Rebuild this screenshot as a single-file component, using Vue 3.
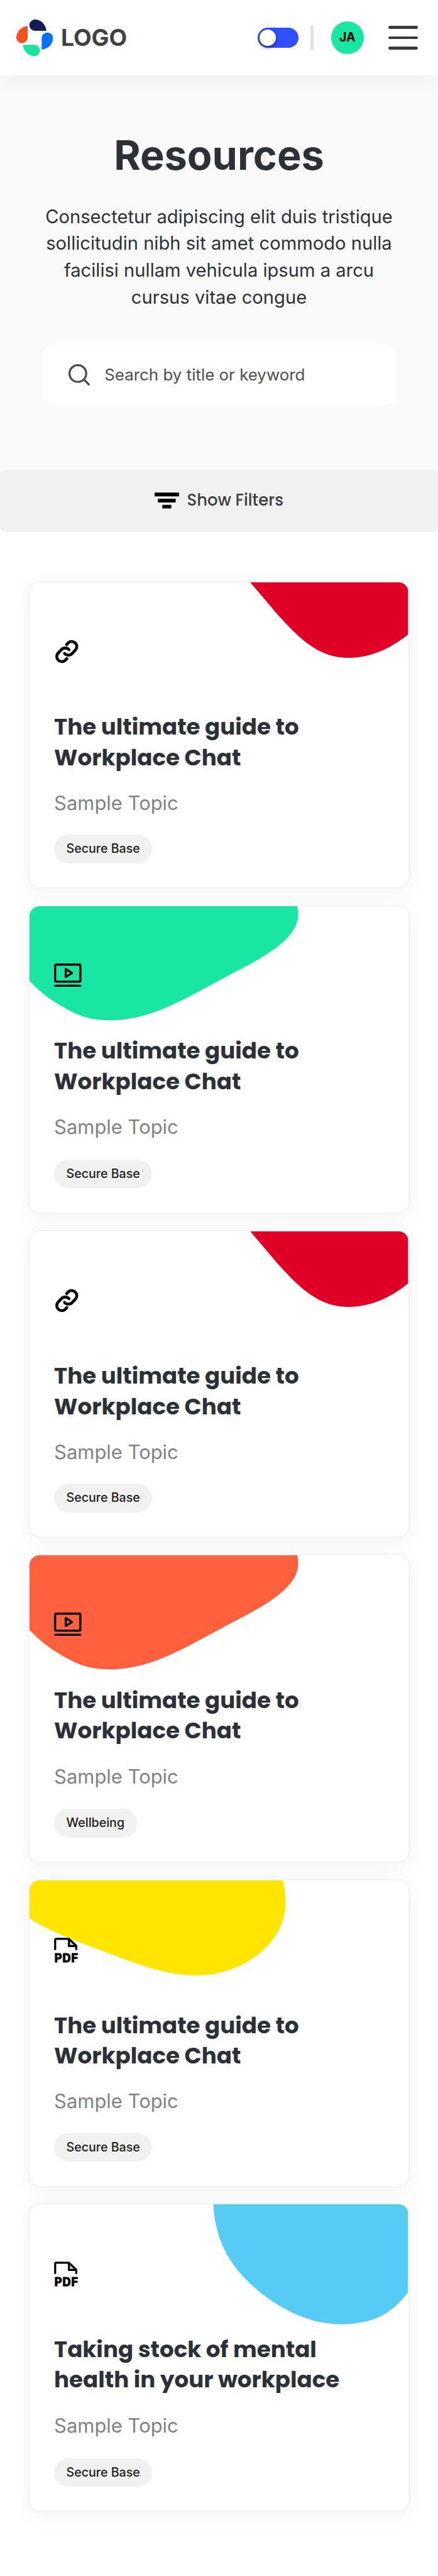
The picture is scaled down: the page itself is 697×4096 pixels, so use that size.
<script setup>
const blobs = {
  red: { fill: '#e10025', d: 'M651 0L728 91C790 160 850 222.5 938 222.5C1003 222.5 1060 198 1116 153.7V0Z' },
  green: { fill: '#19e6a3', d: 'M0 0V220.5C40 262 85 292 130 313.5C165 330 200 336.2 240 336.2C340 336.2 430 288 506 247.4L600 197C705 143 792 92 792 25C792 15 791 7 789 0Z' },
  orange: { fill: '#ff613f', d: 'M0 0V220.5C40 262 85 292 130 313.5C165 330 200 336.2 240 336.2C340 336.2 430 288 506 247.4L600 197C705 143 792 92 792 25C792 15 791 7 789 0Z' },
  yellow: { fill: '#ffe600', d: 'M0 0V112C45 142 100 163 153 184.3L240 217.4C320 248 405 279.8 491 279.8C632 279.8 755 183 755 66C755 42 752 20 747 0Z' },
  blue: { fill: '#56cbf3', d: 'M541.7 0C548 107 590 183 671 252C745 313 830 353.4 918 353.4C1005 353 1065 328 1116 259.5V0Z' },
}

const cards = [
  { title: 'The ultimate guide to Workplace Chat', topic: 'Sample Topic', tag: 'Secure Base', icon: 'link', blob: blobs.red },
  { title: 'The ultimate guide to Workplace Chat', topic: 'Sample Topic', tag: 'Secure Base', icon: 'video', blob: blobs.green },
  { title: 'The ultimate guide to Workplace Chat', topic: 'Sample Topic', tag: 'Secure Base', icon: 'link', blob: blobs.red },
  { title: 'The ultimate guide to Workplace Chat', topic: 'Sample Topic', tag: 'Wellbeing', icon: 'video', blob: blobs.orange },
  { title: 'The ultimate guide to Workplace Chat', topic: 'Sample Topic', tag: 'Secure Base', icon: 'pdf', blob: blobs.yellow },
  { title: 'Taking stock of mental health in your workplace', topic: 'Sample Topic', tag: 'Secure Base', icon: 'pdf', blob: blobs.blue },
]

const petals = [
  { angle: 0, fill: '#141b55' },
  { angle: 90, fill: '#0070ff' },
  { angle: 180, fill: '#19e5a0' },
  { angle: 270, fill: '#f25022' },
]
</script>

<template>
  <div class="page">
    <header class="header">
      <a class="brand">
        <svg class="mark" viewBox="0 0 36 36">
          <path
            v-for="p in petals"
            :key="p.angle"
            d="M18.3 11.1A5.55 5.55 0 0 1 18.3 0C24.2 0 29 5 29.5 11.1Z"
            :fill="p.fill"
            :transform="`rotate(${p.angle} 18 18)`"
          />
        </svg>
        <span class="brand-name">LOGO</span>
      </a>
      <div class="actions">
        <button class="toggle" aria-label="Theme"><span class="knob"></span></button>
        <span class="divider"></span>
        <span class="avatar">JA</span>
        <button class="burger" aria-label="Menu"><i></i><i></i><i></i></button>
      </div>
    </header>

    <section class="hero">
      <h1>Resources</h1>
      <p>Consectetur adipiscing elit duis tristique sollicitudin nibh sit amet commodo nulla facilisi nullam vehicula ipsum a arcu cursus vitae congue</p>
      <div class="search">
        <svg class="search-icon" viewBox="0 0 21 21" fill="none" stroke="#4d4d4d" stroke-width="2" stroke-linecap="round">
          <circle cx="9.2" cy="9.2" r="8.2" />
          <path d="M15.2 15.2L19.9 19.9" />
        </svg>
        <span>Search by title or keyword</span>
      </div>
    </section>

    <button class="filters">
      <svg class="filter-icon" viewBox="0 0 24 16">
        <path d="M0 .2H24V3.8H0ZM3.3 6.2H20.7V9.8H3.3ZM7.6 12.2H16.4V15.8H7.6Z" />
      </svg>
      <span>Show Filters</span>
    </button>

    <main class="list">
      <article v-for="(card, i) in cards" :key="i" class="card">
        <svg class="blob" viewBox="0 0 1116 360" preserveAspectRatio="xMinYMin meet">
          <path :d="card.blob.d" :fill="card.blob.fill" />
        </svg>
        <div class="body">
          <svg class="icon" viewBox="0 0 30 30" fill="none" stroke="#000" stroke-linecap="round" stroke-linejoin="round">
            <g v-if="card.icon === 'link'" stroke-width="2.9">
              <path d="M12.4 8.6L14.3 6.6A5 5 0 0 1 21.3 13.6L17.7 17.4A5 5 0 0 1 10.3 17.3" />
              <path d="M12.6 22.3L10.7 24.3A5 5 0 0 1 3.7 17.3L7.3 13.5A5 5 0 0 1 14.7 13.6" />
            </g>
            <g v-else-if="card.icon === 'video'" stroke-width="2.1">
              <rect x="1.05" y="4.2" width="24.8" height="16.7" rx="1" />
              <path d="M11.5 8.5V16.3L17.7 12.4Z" />
              <path d="M1.1 24.9H25.8" />
            </g>
            <g v-else stroke-width="2">
              <path d="M14.6 4.3V11.4H21.8Z" fill="#cfcfcf" stroke="none" />
              <path d="M1.1 14.5V5.2Q1.1 4.3 2 4.3H14.6L21.8 11V14.5M14.6 4.3V11.4H21.8" />
              <text class="pdf" x=".4" y="27.4" textLength="23.2" lengthAdjust="spacing">PDF</text>
            </g>
          </svg>
          <h2>{{ card.title }}</h2>
          <div class="topic">{{ card.topic }}</div>
          <span class="tag">{{ card.tag }}</span>
        </div>
      </article>
    </main>
  </div>
</template>

<style>
/* 1rem equals ten layout units; the page is 430 units wide. */
html { font-size: 16.205px; }
body { margin: 0; background: #fff; overflow: hidden; }
</style>

<style scoped>
.page {
  width: 100%;
  background: #fff;
  font-family: Inter, sans-serif;
  color: #2c3138;
}
button { border: 0; padding: 0; margin: 0; background: none; font: inherit; }

.header {
  position: relative;
  z-index: 1;
  box-sizing: border-box;
  height: 7.4rem;
  padding: 0 1.97rem 0 1.6rem;
  display: flex;
  align-items: center;
  justify-content: space-between;
  background: #fff;
  box-shadow: 0 .4rem 2.4rem rgba(0, 0, 0, .06);
}
.brand { display: flex; align-items: center; gap: .78rem; }
.mark { width: 3.6rem; height: 3.6rem; display: block; }
.brand-name {
  font-size: 2.3rem;
  font-weight: 700;
  line-height: 2.4rem;
  color: #414141;
}
.actions { display: flex; align-items: center; }
.toggle {
  box-sizing: border-box;
  width: 4rem;
  height: 2rem;
  padding: .2rem;
  border-radius: 1rem;
  background: #304ffe;
  display: flex;
}
.knob {
  width: 1.6rem;
  height: 1.6rem;
  border-radius: 50%;
  background: #fff;
  box-shadow: 0 .2rem .4rem rgba(0, 0, 0, .4);
}
.divider { width: .3rem; height: 2.4rem; margin-left: 1.2rem; background: #e1e1e1; }
.avatar {
  width: 3.2rem;
  height: 3.2rem;
  margin-left: 1.7rem;
  border-radius: 50%;
  background: #19e6a3;
  color: #000;
  font-size: 1.2rem;
  font-weight: 700;
  line-height: 3.2rem;
  text-align: center;
}
.burger { width: 2.93rem; margin-left: 2.4rem; display: grid; gap: .73rem; }
.burger i { height: .3rem; border-radius: .15rem; background: #3c3c3c; }

.hero {
  box-sizing: border-box;
  height: 38.7rem;
  padding: 5.44rem 4.2rem 0;
  background: #fafafa;
}
h1 {
  margin: 0;
  font-size: 4rem;
  font-weight: 700;
  line-height: 4.8rem;
  text-align: center;
}
.hero p {
  margin: 2.33rem 0 3.29rem;
  font-size: 1.8rem;
  line-height: 2.635rem;
  text-align: center;
}
.search {
  box-sizing: border-box;
  height: 5.92rem;
  padding: 0 0 0 2.52rem;
  border-radius: 1rem;
  display: flex;
  align-items: center;
  gap: 1.44rem;
  background: #fff;
  color: #4d4d4d;
  font-size: 1.6rem;
}
.search-icon { width: 2.1rem; height: 2.1rem; }

.filters {
  width: 100%;
  height: 6.1rem;
  border-radius: .5rem;
  background: #f1f1f1;
  display: flex;
  align-items: center;
  justify-content: center;
  gap: .78rem;
  color: #3f3f3f;
  font-family: Poppins, Inter, sans-serif;
  font-size: 1.6rem;
  font-weight: 500;
}
.filters span { line-height: 2.4rem; margin-bottom: .14rem; }
.filter-icon { width: 2.4rem; height: 1.6rem; margin-bottom: .1rem; }

.list {
  padding: 4.8rem 2.8rem 6.3rem;
  display: grid;
  gap: 1.6rem;
}
.card {
  position: relative;
  box-sizing: border-box;
  height: 30.2rem;
  border: 2px solid #f3f3f3;
  border-radius: 1.1rem;
  background: #fff;
  box-shadow: 0 .4rem 2rem rgba(0, 0, 0, .05);
  overflow: hidden;
}
.card:nth-child(even) { height: 30.3rem; }
.blob { position: absolute; left: 0; top: 0; width: 100%; display: block; }
.body { position: relative; padding: 5.28rem 2.39rem 0; }
.icon { display: block; width: 3rem; height: 3rem; }
.pdf {
  font-family: Inter, sans-serif;
  font-size: 11.2px;
  font-weight: 700;
  fill: #000;
  stroke-width: .7px;
}
h2 {
  max-width: 30rem;
  margin: 4.46rem 0 0;
  font-family: Poppins, Inter, sans-serif;
  font-size: 2.2rem;
  font-weight: 700;
  line-height: 3rem;
}
.topic {
  margin-top: 1.77rem;
  font-size: 1.91rem;
  line-height: 2.4rem;
  color: #828282;
}
.tag {
  display: block;
  box-sizing: border-box;
  width: fit-content;
  height: 2.8rem;
  margin-top: 1.87rem;
  padding: 0 1.2rem;
  border-radius: 1.4rem;
  background: #f1f1f1;
  color: #1c1c1c;
  font-size: 1.21rem;
  font-weight: 500;
  line-height: 2.8rem;
}
.card:nth-child(even) .tag { margin-top: 1.97rem; }
</style>
